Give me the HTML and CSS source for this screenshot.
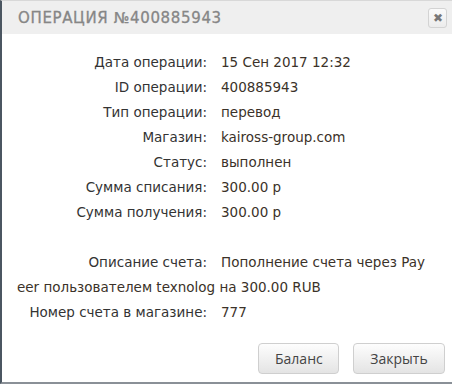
FILE: index.html
```html
<!DOCTYPE html>
<html lang="ru">

<head>
    <meta charset="UTF-8">
    <meta name="viewport" content="width=device-width, initial-scale=1.0">
    <title>Операция</title>
    <link rel="stylesheet" href="styles.css">
</head>

<body>
    <div class="dialog">
        <div class="dialog-title">
            <span>Операция №400885943</span>
            <button class="close-button" title="Закрыть">&#10006;</button>
        </div>

        <div class="dialog-content">
            <div class="info-row"><span class="info-label">Дата операции:</span><span class="info-value">15 Сен 2017 12:32</span></div>
            <div class="info-row"><span class="info-label">ID операции:</span><span class="info-value">400885943</span></div>
            <div class="info-row"><span class="info-label">Тип операции:</span><span class="info-value">перевод</span></div>
            <div class="info-row"><span class="info-label">Магазин:</span><span class="info-value">kaiross-group.com</span></div>
            <div class="info-row"><span class="info-label">Статус:</span><span class="info-value">выполнен</span></div>
            <div class="info-row"><span class="info-label">Сумма списания:</span><span class="info-value">300.00 р</span></div>
            <div class="info-row"><span class="info-label">Сумма получения:</span><span class="info-value">300.00 р</span></div>
            <div class="info-row empty"></div>
            <div class="info-row"><span class="info-label">Описание счета:</span><span class="info-value">Пополнение счета через Pay<br>eer пользователем texnolog на 300.00 RUB</span></div>
            <div class="info-row"><span class="info-label">Номер счета в магазине:</span><span class="info-value">777</span></div>
        </div>

        <!-- Кнопки внизу окна -->
        <div class="dialog-buttons">
            <button class="dialog-button">Баланс</button>
            <button class="dialog-button">Закрыть</button>
        </div>
    </div>
</body>

</html>
```

FILE: styles.css
```css
html,
body {
    margin: 0;
    padding: 0;
    background-color: #fff;
    overflow: hidden;
}

.dialog {
    height: 384px;
    border-left: 2px solid #4b5661;
    border-bottom: 2px solid #8a9097;
    border-top: 1px solid #d8d8d8;
    box-sizing: border-box;
    font-family: "DejaVu Sans", sans-serif;
    color: #333;
    display: flex;
    flex-direction: column;
}

.dialog-title {
    height: 33px;
    background-color: #efefef;
    display: flex;
    align-items: center;
    justify-content: space-between;
    padding: 0 5px 0 16px;
}

.dialog-title span {
    text-transform: uppercase;
    font-size: 15px;
    letter-spacing: 0.65px;
    color: #868686;
    -webkit-text-stroke: 0.3px #868686;
}

.close-button {
    width: 19px;
    height: 20px;
    padding: 0;
    border: 1px solid #d3d3d3;
    border-radius: 3px;
    background: linear-gradient(#fafafa, #ececec);
    color: #777;
    font-size: 12px;
    line-height: 18px;
    cursor: pointer;
}

.dialog-content {
    padding: 16px 10px 0 15px;
    font-size: 13.5px;
    line-height: 25px;
}

.info-row.empty {
    height: 25px;
}

.info-label {
    display: inline-block;
    width: 190px;
    margin-right: 14px;
    text-align: right;
}

.info-value {
    color: #3b3229;
}

.dialog-buttons {
    margin-top: auto;
    display: flex;
    justify-content: flex-end;
    gap: 14px;
    padding: 0 7px 8px 0;
}

.dialog-button {
    height: 31px;
    padding: 0 16px;
    border: 1px solid #cfcfcf;
    border-radius: 4px;
    background: linear-gradient(#fdfdfd, #e4e4e4);
    font-family: "Open Sans", sans-serif;
    font-size: 14px;
    color: #444;
    cursor: pointer;
}

.dialog-button:first-child {
    width: 81px;
}

.dialog-button:last-child {
    width: 92px;
}
```
